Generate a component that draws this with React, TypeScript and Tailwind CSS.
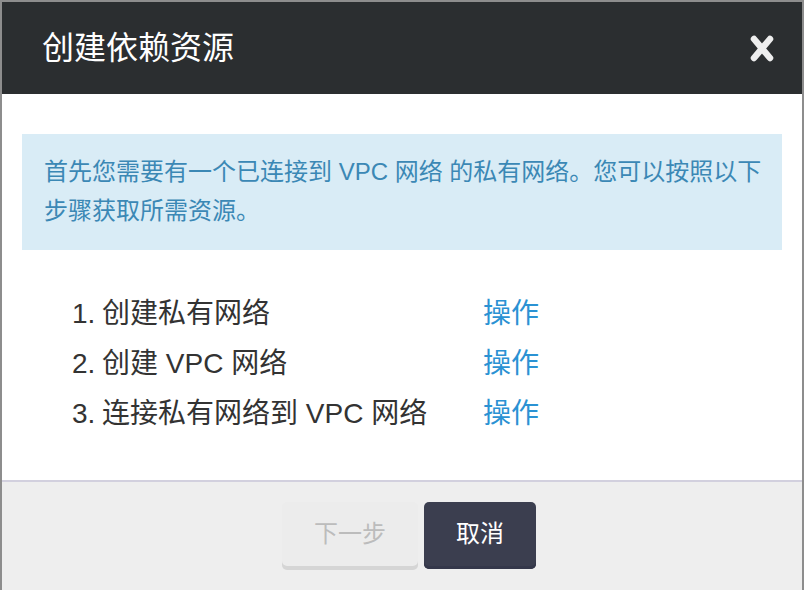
import React from 'react';

const FONT = '"Liberation Sans", "Noto Sans CJK SC", sans-serif';

const steps = [
  { no: '1.', label: '创建私有网络' },
  { no: '2.', label: '创建 VPC 网络' },
  { no: '3.', label: '连接私有网络到 VPC 网络' },
];

function CloseIcon() {
  return (
    <svg width="24" height="27" viewBox="0 0 24 27" fill="none">
      <path d="M4 4 L20 23 M20 4 L4 23" stroke="#eeeeee" strokeWidth="6.5" strokeLinecap="round" />
    </svg>
  );
}

export default function App() {
  return (
    <div
      className="w-[804px] h-[590px] border-2 border-b-0 border-[#8d8d8d] bg-white flex flex-col overflow-hidden"
      style={{ fontFamily: FONT }}
    >
      {/* header */}
      <div className="h-[92px] shrink-0 bg-[#2b2e30] flex items-center justify-between pl-[40px] pr-[28px]">
        <h1 className="text-[32px] leading-none text-white font-normal">创建依赖资源</h1>
        <CloseIcon />
      </div>

      {/* body */}
      <div className="flex-1 px-[20px] pt-[40px]">
        <div className="bg-[#d9ecf6] text-[#3b88b5] text-[24px] leading-[39px] pl-[22px] pr-[18px] pt-[18px] pb-[20px]">
          首先您需要有一个已连接到 VPC 网络 的私有网络。您可以按照以下步骤获取所需资源。
        </div>

        <ul className="mt-[39px] pl-[50px]">
          {steps.map((s) => (
            <li key={s.no} className="h-[50px] flex items-center text-[28px] text-[#333333]">
              <span className="w-[411px] flex">
                <span className="w-[30px]">{s.no}</span>
                <span>{s.label}</span>
              </span>
              <span className="text-[#2b92d3] cursor-pointer">操作</span>
            </li>
          ))}
        </ul>
      </div>

      {/* footer */}
      <div className="h-[110px] shrink-0 border-t-2 border-[#d2d0de] bg-[#eeeeee] flex justify-center items-start pt-[20px] pl-[14px] gap-[6px]">
        <button
          disabled
          className="w-[136px] h-[68px] rounded-[5px] bg-[#ececec] shadow-[inset_0_-4px_0_#d5d5d5] text-[#bcbcbc] text-[24px] pb-[4px]"
        >
          下一步
        </button>
        <button className="w-[112px] h-[67px] rounded-[5px] bg-[#3b3e4f] shadow-[inset_0_-3px_0_#34374a] text-white text-[24px] pb-[3px]">
          取消
        </button>
      </div>
    </div>
  );
}
